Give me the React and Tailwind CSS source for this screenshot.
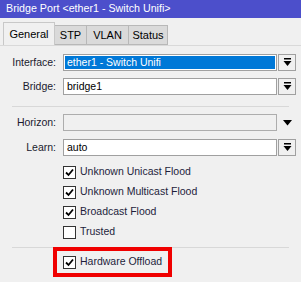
import React from 'react'

const font = { fontFamily: '"Liberation Sans", Arial, sans-serif' }

function DropBtn() {
  return (
    <div className="w-[18px] h-[17px] border border-[#a0a0a0] bg-[#f0f0f0] flex items-center justify-center ml-[1px] shrink-0">
      <svg width="9" height="9" viewBox="0 0 9 9">
        <rect x="1" y="0" width="7" height="1.5" fill="#000" />
        <polygon points="0.5,3 8.5,3 4.5,8" fill="#000" />
      </svg>
    </div>
  )
}

function Row({ label, children, className = '' }) {
  return (
    <div className={`flex items-center h-[17px] ${className}`}>
      <div className="w-[57px] text-right pr-[1px] text-[#1a1a2e]">{label}</div>
      <div className="flex ml-[6px] w-[233px]">{children}</div>
    </div>
  )
}

function Check({ checked, label }) {
  return (
    <div className="flex items-center h-[20px] pl-[63px]">
      <div className="w-[13px] h-[13px] border border-[#333] bg-white flex items-center justify-center">
        {checked && (
          <svg width="9" height="9" viewBox="0 0 9 9">
            <path d="M1 4.5 L3.5 7 L8 1.5" stroke="#000" strokeWidth="1.8" fill="none" />
          </svg>
        )}
      </div>
      <span className="ml-[4px] text-[#1e1e3c]">{label}</span>
    </div>
  )
}

export default function App() {
  return (
    <div className="w-[301px] h-[282px] bg-[#f0f0f0] text-[10.5px] overflow-hidden relative" style={font}>
      <div className="h-[18px] bg-[#4c4fcb] text-white text-[10.7px] leading-[17px] pl-[6px]">
        Bridge Port &lt;ether1 - Switch Unifi&gt;
      </div>

      <div className="flex items-end h-[28px] pl-[3px] border-b border-[#d9d9d9] text-[11px] text-black">
        <div className="h-[23px] w-[52px] flex items-center justify-center bg-[#f0f0f0] border border-b-0 border-[#c8c8c8]">General</div>
        <div className="h-[20px] w-[32px] flex items-center justify-center bg-[#dadada] border border-l-0 border-[#b8b8b8]">STP</div>
        <div className="h-[20px] w-[42px] flex items-center justify-center bg-[#dadada] border border-l-0 border-[#b8b8b8]">VLAN</div>
        <div className="h-[20px] w-[39px] flex items-center justify-center bg-[#dadada] border border-l-0 border-[#b8b8b8]">Status</div>
      </div>

      <div className="pt-[8px]">
        <Row label="Interface:">
          <div className="flex-1 h-[17px] border border-[#a0a0a0] bg-white p-[1px]">
            <div className="h-full bg-[#0078d7] text-white leading-[13px] pl-[2px]">ether1 - Switch Unifi</div>
          </div>
          <DropBtn />
        </Row>
        <Row label="Bridge:" className="mt-[7px]">
          <div className="flex-1 h-[17px] border border-[#a0a0a0] bg-white leading-[15px] pl-[3px] text-black">bridge1</div>
          <DropBtn />
        </Row>

        <div className="mx-[12px] mt-[11px] border-t border-[#d8d8d8]" />

        <Row label="Horizon:" className="mt-[7px]">
          <div className="flex-1 h-[17px] border border-[#adadad] bg-[#f0f0f0]" />
          <div className="w-[18px] h-[17px] ml-[1px] flex items-center justify-center">
            <svg width="9" height="6" viewBox="0 0 9 6">
              <polygon points="0,0 9,0 4.5,5.5" fill="#000" />
            </svg>
          </div>
        </Row>
        <Row label="Learn:" className="mt-[8px]">
          <div className="flex-1 h-[17px] border border-[#a0a0a0] bg-white leading-[15px] pl-[3px] text-black">auto</div>
          <DropBtn />
        </Row>

        <div className="mt-[6px]">
          <Check checked label="Unknown Unicast Flood" />
          <Check checked label="Unknown Multicast Flood" />
          <Check checked label="Broadcast Flood" />
          <Check label="Trusted" />
        </div>

        <div className="mx-[12px] mt-[5px] border-t border-[#d8d8d8]" />

        <div className="relative mt-[4px]">
          <Check checked label="Hardware Offload" />
          <div className="absolute left-[53px] top-[-5px] w-[119px] h-[30px] border-4 border-[#f00000]" />
        </div>
      </div>
    </div>
  )
}
